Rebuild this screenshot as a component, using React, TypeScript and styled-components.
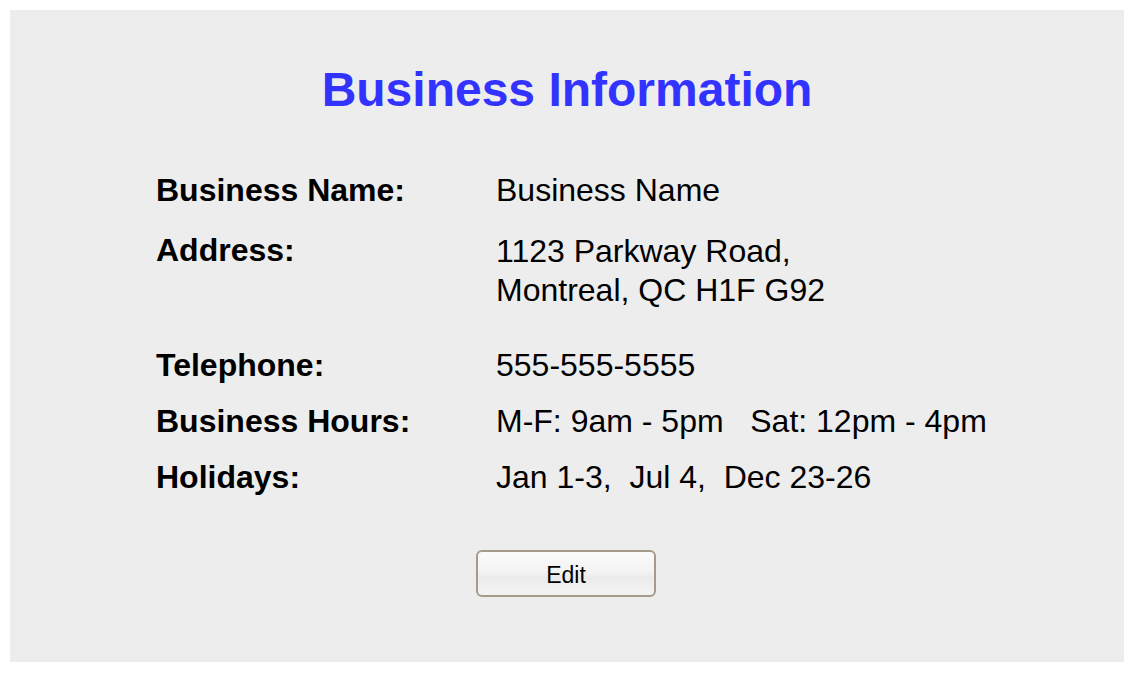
import React from "react";
import styled, { createGlobalStyle } from "styled-components";

const GlobalStyle = createGlobalStyle`
  html, body {
    margin: 0;
    padding: 0;
    background: #ffffff;
  }
  body {
    padding: 10px;
    font-family: "Liberation Sans", Arial, Helvetica, sans-serif;
  }
`;

const Panel = styled.section`
  width: 1114px;
  height: 652px;
  box-sizing: border-box;
  background: #ededed;
  padding-top: 52px;
  display: flex;
  flex-direction: column;
`;

const Title = styled.h1`
  margin: 0;
  font-size: 48px;
  line-height: 55px;
  font-weight: bold;
  color: #3333ff;
  text-align: center;
`;

const InfoList = styled.div`
  margin-top: 55px;
  padding-left: 146px;
  display: flex;
  flex-direction: column;
`;

const Row = styled.div<{ $top: number }>`
  display: grid;
  grid-template-columns: 340px 1fr;
  margin-top: ${(p) => p.$top}px;
  font-size: 32px;
  line-height: 37px;
  color: #000;
`;

const Label = styled.div`
  font-weight: bold;
`;

const Value = styled.div<{ $lh?: number }>`
  white-space: pre;
  line-height: ${(p) => p.$lh ?? 37}px;
`;

const ButtonBar = styled.div`
  display: flex;
  justify-content: center;
  margin-top: 54px;
  padding-right: 2px;
`;

const EditButton = styled.button`
  width: 180px;
  height: 47px;
  box-sizing: border-box;
  border: 2px solid #a69b8b;
  border-radius: 6px;
  background: linear-gradient(#fbfbfb 0%, #f3f3f3 45%, #ebebeb 60%, #f4f4f4 100%);
  font-family: "Liberation Sans", Arial, Helvetica, sans-serif;
  font-size: 23px;
  color: #000;
  padding: 3px 0 0 0;
  cursor: pointer;
`;

const rows = [
  { label: "Business Name:", value: "Business Name", top: 0 },
  { label: "Address:", value: "1123 Parkway Road,\nMontreal, QC H1F G92", top: 23, lh: 39 },
  { label: "Telephone:", value: "555-555-5555", top: 37 },
  { label: "Business Hours:", value: "M-F: 9am - 5pm   Sat: 12pm - 4pm", top: 19 },
  { label: "Holidays:", value: "Jan 1-3,  Jul 4,  Dec 23-26", top: 19 },
];

export default function App() {
  return (
    <>
      <GlobalStyle />
      <Panel>
        <Title>Business Information</Title>
        <InfoList>
          {rows.map((r) => (
            <Row key={r.label} $top={r.top}>
              <Label>{r.label}</Label>
              <Value $lh={r.lh}>{r.value}</Value>
            </Row>
          ))}
        </InfoList>
        <ButtonBar>
          <EditButton type="button">Edit</EditButton>
        </ButtonBar>
      </Panel>
    </>
  );
}
